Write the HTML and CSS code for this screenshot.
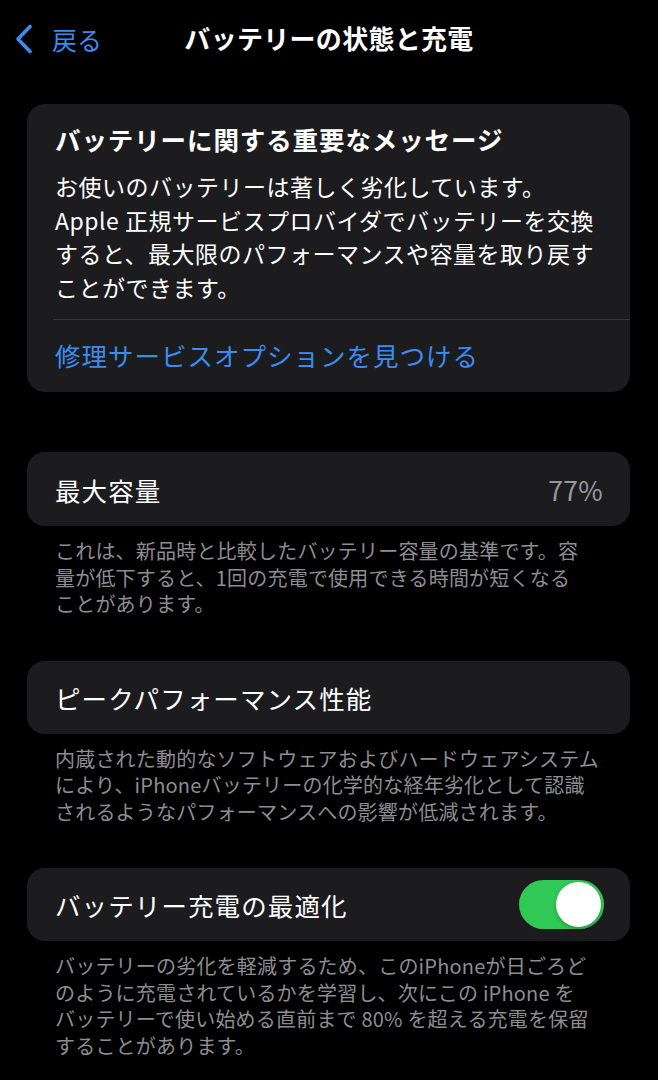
FILE: index.html
```html
<!DOCTYPE html>
<html lang="ja">
<head>
<meta charset="utf-8">
<link rel="stylesheet" href="styles.css">
</head>
<body>
<div class="screen">
  <header class="nav">
    <div class="back">
      <svg class="chev" width="20" height="30" viewBox="0 0 20 30"><path d="M16 2.5 L4 15 L16 27.5" fill="none" stroke="#3b8cf0" stroke-width="3.6" stroke-linecap="round" stroke-linejoin="round"/></svg>
      <span class="back-text">戻る</span>
    </div>
    <div class="title">バッテリーの状態と充電</div>
  </header>

  <section class="card msg">
    <div class="msg-body">
      <div class="msg-title">バッテリーに関する重要なメッセージ</div>
      <p class="msg-text">お使いのバッテリーは著しく劣化しています。<br>Apple 正規サービスプロバイダでバッテリーを交換<br>すると、最大限のパフォーマンスや容量を取り戻す<br>ことができます。</p>
    </div>
    <div class="sep"></div>
    <div class="link">修理サービスオプションを見つける</div>
  </section>

  <section class="card row first-row">
    <span class="label">最大容量</span>
    <span class="value">77%</span>
  </section>
  <p class="foot">これは、新品時と比較したバッテリー容量の基準です。容<br>量が低下すると、1回の充電で使用できる時間が短くなる<br>ことがあります。</p>

  <section class="card row">
    <span class="label">ピークパフォーマンス性能</span>
  </section>
  <p class="foot">内蔵された動的なソフトウェアおよびハードウェアシステム<br>により、iPhoneバッテリーの化学的な経年劣化として認識<br>されるようなパフォーマンスへの影響が低減されます。</p>

  <section class="card row">
    <span class="label">バッテリー充電の最適化</span>
    <span class="toggle"><span class="knob"></span></span>
  </section>
  <p class="foot">バッテリーの劣化を軽減するため、このiPhoneが日ごろど<br>のように充電されているかを学習し、次にこの iPhone を<br>バッテリーで使い始める直前まで 80% を超える充電を保留<br>することがあります。</p>
</div>
</body>
</html>
```

FILE: styles.css
```css
html, body {
  margin: 0;
  padding: 0;
  background: #000;
}
body {
  font-family: "Noto Sans CJK JP", "Noto Sans", sans-serif;
  color: #fff;
  width: 658px;
  height: 1080px;
  overflow: hidden;
}
.screen {
  padding: 0 28px 0 27px;
}
.nav {
  height: 104px;
  position: relative;
  display: flex;
  align-items: flex-start;
}
.back {
  display: flex;
  align-items: center;
  margin-left: -13px;
  margin-top: 24px;
  height: 30px;
}
.chev {
  display: block;
}
.back-text {
  color: #3b8cf0;
  font-size: 25px;
  line-height: 30px;
  margin-left: 18px;
}
.title {
  position: absolute;
  left: -27px;
  right: -28px;
  top: 22px;
  text-align: center;
  font-size: 26px;
  font-weight: 700;
  line-height: 32px;
  letter-spacing: 0.3px;
}
.card {
  background: #1c1c1e;
  border-radius: 18px;
}
.msg {
  height: 288px;
  display: flex;
  flex-direction: column;
  overflow: hidden;
}
.msg-body {
  padding: 18px 28px 0 28px;
  height: 197px;
  box-sizing: content-box;
}
.msg-title {
  font-size: 25.5px;
  font-weight: 700;
  line-height: 34px;
  letter-spacing: 0.9px;
}
.msg-text {
  margin: 14px 0 0 0;
  font-size: 23px;
  line-height: 33.5px;
  letter-spacing: 0.5px;
}
.sep {
  height: 1px;
  background: #38383a;
  margin-left: 26px;
}
.link {
  flex: 1;
  display: flex;
  align-items: center;
  padding-left: 28px;
  padding-bottom: 3px;
  color: #3b8cf0;
  font-size: 25.5px;
  letter-spacing: 1px;
}
.row {
  height: 73px;
  display: flex;
  align-items: center;
  justify-content: space-between;
  padding: 0 26px 0 28px;
  box-sizing: border-box;
}
.first-row {
  margin-top: 60px;
  height: 74px;
}
.label {
  font-size: 25.5px;
  letter-spacing: 1.1px;
}
.value {
  font-size: 26.5px;
  color: #98989e;
  padding-right: 1px;
  letter-spacing: 0.3px;
}
.foot {
  margin: 12px 0 43px 0;
  padding-left: 28px;
  font-size: 20px;
  line-height: 26.5px;
  color: #8d8d93;
  letter-spacing: 0.2px;
}
.toggle {
  width: 85px;
  height: 49px;
  border-radius: 25px;
  background: #31c956;
  position: relative;
  flex: none;
}
.knob {
  position: absolute;
  right: 3px;
  top: 2px;
  width: 45px;
  height: 45px;
  border-radius: 50%;
  background: #fff;
  box-shadow: 0 2px 4px rgba(0,0,0,0.25);
}
```
